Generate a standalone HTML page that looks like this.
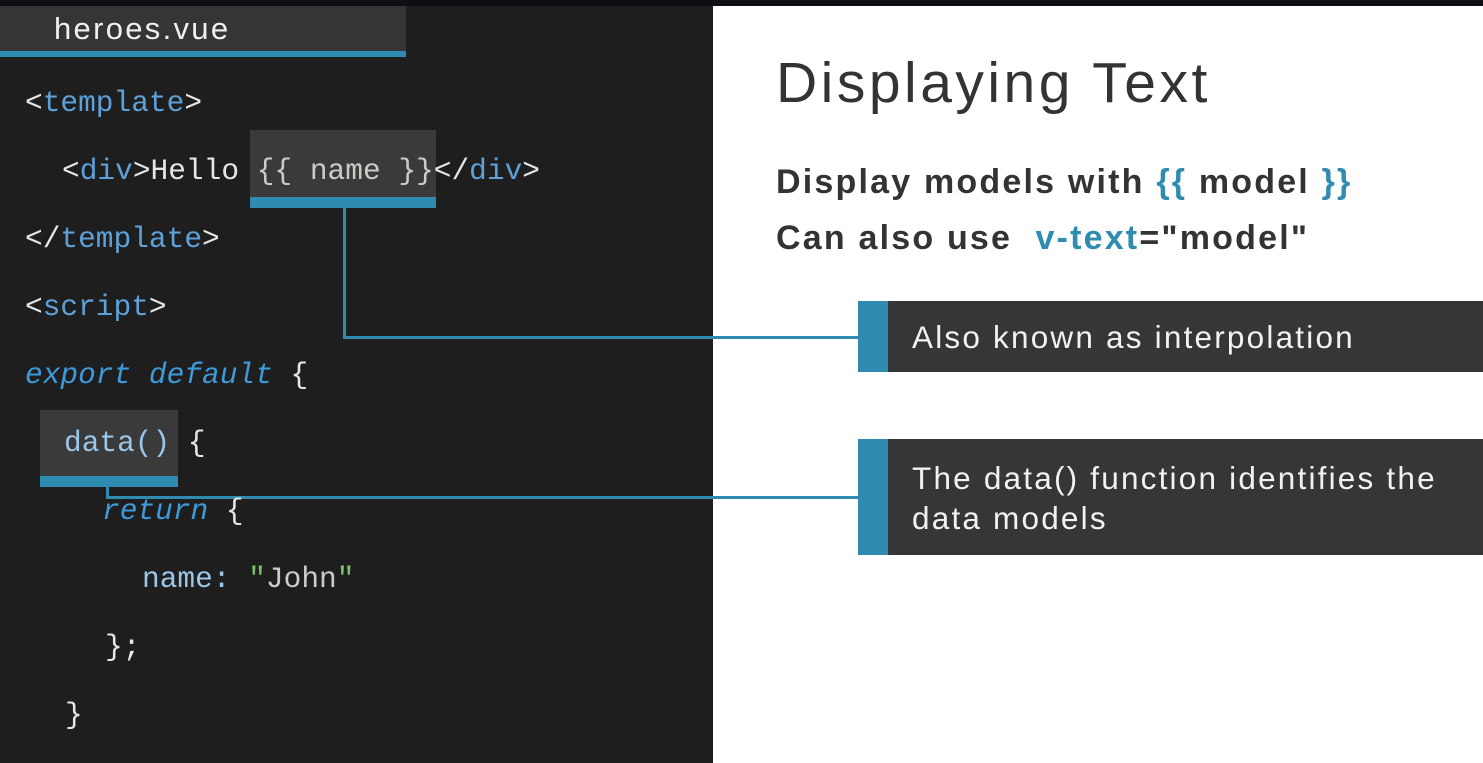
<!DOCTYPE html>
<html><head><style>
*{margin:0;padding:0;box-sizing:border-box}
body{width:1483px;height:763px;background:#0e0f10;position:relative;overflow:hidden;font-family:"Liberation Sans",sans-serif}
.left{position:absolute;left:0;top:6px;width:713px;height:757px;background:#1e1e1e}
.right{position:absolute;left:713px;top:6px;width:770px;height:757px;background:#fff}
.tab{position:absolute;left:0;top:6px;width:406px;height:51px;background:#353535;border-bottom:6px solid #2f8bb0;color:#f0f0f0;font-size:31px;letter-spacing:2.3px;padding:5px 0 0 54px}
.c{position:absolute;font-family:"Liberation Mono",monospace;font-size:29.5px;color:#e6e6e6;white-space:pre;line-height:36px}
.t{color:#5ea0d8}.k{color:#3d9ad8;font-style:italic}.p{color:#9cc6e8}.s{color:#7bc06a}.n{color:#c8cdc6}
.hl{position:absolute;background:#3a3a3a}
.bar{position:absolute;background:#2f8bb0}
.ln{position:absolute;background:#2f8bb0}
.co{position:absolute;left:858px;width:625px;background:#363636;border-left:30px solid #2f8bb0;color:#f2f2f2;font-size:31.5px;letter-spacing:2.2px;padding-left:24px;line-height:40px;white-space:nowrap}
h1{position:absolute;left:776px;top:50px;font-weight:normal;font-size:57px;color:#333;letter-spacing:3.5px}
.b{position:absolute;left:776px;font-weight:bold;font-size:34px;letter-spacing:2.2px;color:#333}
.b span{color:#2f8bb0}
</style></head><body>
<div class="left"></div><div class="right"></div>
<div class="tab">heroes.vue</div>
<div class="hl" style="left:250px;top:130px;width:186px;height:70px"></div>
<div class="bar" style="left:250px;top:197px;width:186px;height:11px"></div>
<div class="hl" style="left:40px;top:410px;width:138px;height:68px"></div>
<div class="bar" style="left:40px;top:476px;width:138px;height:11px"></div>
<div class="ln" style="left:343px;top:208px;width:3px;height:130px"></div>
<div class="ln" style="left:343px;top:336px;width:515px;height:3px"></div>
<div class="ln" style="left:106px;top:487px;width:3px;height:11px"></div>
<div class="ln" style="left:106px;top:496px;width:752px;height:3px"></div>
<div class="c" style="left:25px;top:85px">&lt;<span class="t">template</span>&gt;</div>
<div class="c" style="left:62px;top:153px">&lt;<span class="t">div</span>&gt;Hello <span class="n">{{ name }}</span>&lt;/<span class="t">div</span>&gt;</div>
<div class="c" style="left:25px;top:221px">&lt;/<span class="t">template</span>&gt;</div>
<div class="c" style="left:25px;top:289px">&lt;<span class="t">script</span>&gt;</div>
<div class="c" style="left:25px;top:357px"><span class="k">export default</span> {</div>
<div class="c" style="left:64px;top:425px"><span class="p">data()</span> {</div>
<div class="c" style="left:102px;top:493px"><span class="k">return</span> {</div>
<div class="c" style="left:142px;top:561px"><span class="p">name:</span> <span class="s">"</span><span class="n">John</span><span class="s">"</span></div>
<div class="c" style="left:105px;top:629px">};</div>
<div class="c" style="left:65px;top:697px">}</div>
<h1>Displaying Text</h1>
<div class="b" style="top:163px">Display models with <span>{{</span> model <span>}}</span></div>
<div class="b" style="top:219px">Can also use &nbsp;<span>v-text</span>="model"</div>
<div class="co" style="top:301px;height:71px;padding-top:16px">Also known as interpolation</div>
<div class="co" style="top:439px;height:116px;padding-top:19px">The data() function identifies the<br>data models</div>
</body></html>
